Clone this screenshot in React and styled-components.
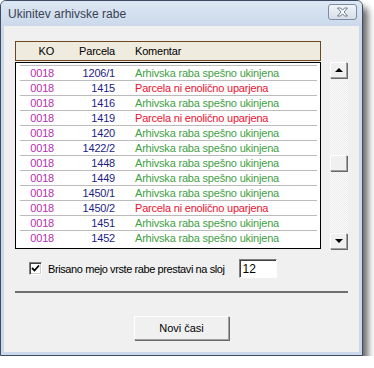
import React from 'react';
import styled, { createGlobalStyle } from 'styled-components';

const GlobalStyle = createGlobalStyle`
  html, body {
    margin: 0;
    padding: 0;
    background: #ffffff;
  }
  body {
    font-family: "Liberation Sans", Arial, sans-serif;
    font-size: 11px;
  }
`;

const rows = [
  { ko: '0018', parcela: '1206/1', ok: true },
  { ko: '0018', parcela: '1415', ok: false },
  { ko: '0018', parcela: '1416', ok: true },
  { ko: '0018', parcela: '1419', ok: false },
  { ko: '0018', parcela: '1420', ok: true },
  { ko: '0018', parcela: '1422/2', ok: true },
  { ko: '0018', parcela: '1448', ok: true },
  { ko: '0018', parcela: '1449', ok: true },
  { ko: '0018', parcela: '1450/1', ok: true },
  { ko: '0018', parcela: '1450/2', ok: false },
  { ko: '0018', parcela: '1451', ok: true },
  { ko: '0018', parcela: '1452', ok: true },
];

const App = () => {
  return (
    <>
      <GlobalStyle />
      <Window>
        <TitleBar>
          <Title>Ukinitev arhivske rabe</Title>
          <CloseButton>
            <svg width="13" height="10" viewBox="0 0 13 10">
              <path
                d="M1.5 1 L4.5 1 L6.5 3.2 L8.5 1 L11.5 1 L8 5 L11.5 9 L8.5 9 L6.5 6.8 L4.5 9 L1.5 9 L5 5 Z"
                fill="#ffffff"
                stroke="#5f6f86"
                strokeWidth="0.9"
                strokeLinejoin="round"
              />
            </svg>
          </CloseButton>
        </TitleBar>
        <Client>
          <ListArea>
            <ListColumn>
              <Header>
                <KoCell>KO</KoCell>
                <ParcelaCell>Parcela</ParcelaCell>
                <CommentCell>Komentar</CommentCell>
              </Header>
              <List>
                {rows.map((r, i) => (
                  <Row key={i}>
                    <KoCell $color="#b52db5">{r.ko}</KoCell>
                    <ParcelaCell $color="#1d1d86">{r.parcela}</ParcelaCell>
                    <CommentCell $color={r.ok ? '#3f9f45' : '#f0112f'}>
                      {r.ok ? 'Arhivska raba spešno ukinjena' : 'Parcela ni enolično uparjena'}
                    </CommentCell>
                  </Row>
                ))}
              </List>
            </ListColumn>
            <ScrollBar>
              <ScrollButton>
                <Arrow $up />
              </ScrollButton>
              <Track>
                <Thumb />
              </Track>
              <ScrollButton>
                <Arrow />
              </ScrollButton>
            </ScrollBar>
          </ListArea>

          <OptionRow>
            <CheckBox>
              <svg width="9" height="9" viewBox="0 0 9 9">
                <path d="M1 4 L3.5 6.5 L8 1.5" fill="none" stroke="#000" strokeWidth="1.8" />
              </svg>
            </CheckBox>
            <OptionLabel>Brisano mejo vrste rabe prestavi na sloj</OptionLabel>
            <NumberField>12</NumberField>
          </OptionRow>

          <Separator />

          <ButtonRow>
            <PushButton>Novi časi</PushButton>
          </ButtonRow>
        </Client>
      </Window>
    </>
  );
};

export default App;

const Window = styled.div`
  width: 363px;
  height: 356px;
  box-sizing: border-box;
  display: flex;
  flex-direction: column;
  border: 1px solid #3d4c62;
  border-radius: 6px 6px 0 0;
  background: #cad8ea;
  box-shadow: 5px 7px 7px rgba(0, 0, 0, 0.6);
`;

const TitleBar = styled.div`
  height: 25px;
  flex: 0 0 25px;
  display: flex;
  align-items: center;
  justify-content: space-between;
  padding: 0 5px 0 7px;
  border-radius: 5px 5px 0 0;
  background: linear-gradient(#dde7f4, #cbd9eb);
`;

const Title = styled.span`
  font-family: "Liberation Sans", Arial, sans-serif;
  font-size: 12px;
  color: #3a4250;
  margin-top: 1px;
`;

const CloseButton = styled.div`
  width: 29px;
  height: 16px;
  margin-top: -3px;
  box-sizing: border-box;
  border: 1px solid #7c8ca3;
  border-radius: 3px;
  background: linear-gradient(#f1f4f8, #d7dee8);
  display: flex;
  align-items: center;
  justify-content: center;
`;

const Client = styled.div`
  flex: 1;
  margin: 0 3px 3px 3px;
  background: #f0f0f0;
  padding: 15px 11px 0 11px;
  display: flex;
  flex-direction: column;
`;

const ListArea = styled.div`
  display: flex;
  gap: 9px;
`;

const ListColumn = styled.div`
  width: 306px;
  display: flex;
  flex-direction: column;
  gap: 1px;
`;

const Header = styled.div`
  height: 20px;
  box-sizing: border-box;
  border: 1px solid #6e4621;
  background: #efebde;
  display: flex;
  align-items: center;
  padding-left: 4px;
  color: #000;
`;

const List = styled.div`
  height: 187px;
  box-sizing: border-box;
  border: 1px solid #000;
  background: #fff;
  padding: 2px 3px 0 4px;
`;

const Row = styled.div`
  height: 15px;
  box-sizing: border-box;
  border-top: 1px solid #bcbcbc;
  display: flex;
  align-items: center;
`;

const Cell = styled.span`
  color: ${(p) => p.$color || '#000'};
  letter-spacing: -0.2px;
  white-space: nowrap;
  line-height: 13px;
`;

const KoCell = styled(Cell)`
  width: 34px;
  text-align: right;
`;

const ParcelaCell = styled(Cell)`
  width: 61px;
  text-align: right;
`;

const CommentCell = styled(Cell)`
  padding-left: 20px;
`;

const ScrollBar = styled.div`
  width: 18px;
  margin-top: 21px;
  height: 187px;
  display: flex;
  flex-direction: column;
`;

const raised = `
  box-sizing: border-box;
  background: #f0f0f0;
  border-top: 1px solid #ffffff;
  border-left: 1px solid #ffffff;
  border-right: 1px solid #a0a0a0;
  border-bottom: 1px solid #a0a0a0;
  box-shadow: 1px 1px 0 #696969;
`;

const ScrollButton = styled.div`
  ${raised}
  width: 17px;
  height: 16px;
  display: flex;
  align-items: center;
  justify-content: center;
`;

const Arrow = styled.div`
  width: 0;
  height: 0;
  border-left: 4px solid transparent;
  border-right: 4px solid transparent;
  ${(p) => (p.$up ? 'border-bottom: 4px solid #000;' : 'border-top: 4px solid #000;')}
`;

const Track = styled.div`
  flex: 1;
  margin: 1px 0;
  background-color: #f6f6f6;
  background-image: repeating-conic-gradient(#ececec 0% 25%, #fbfbfb 0% 50%);
  background-size: 2px 2px;
  padding-top: 76px;
`;

const Thumb = styled.div`
  ${raised}
  width: 17px;
  height: 16px;
`;

const OptionRow = styled.div`
  display: flex;
  align-items: center;
  margin-top: 10px;
  padding-left: 14px;
  height: 19px;
`;

const CheckBox = styled.div`
  width: 13px;
  height: 13px;
  box-sizing: border-box;
  background: #fff;
  border-top: 1px solid #808080;
  border-left: 1px solid #808080;
  border-right: 1px solid #ffffff;
  border-bottom: 1px solid #ffffff;
  box-shadow: inset 1px 1px 0 #404040, inset -1px -1px 0 #d4d0c8;
  display: flex;
  align-items: center;
  justify-content: center;
`;

const OptionLabel = styled.span`
  margin-left: 6px;
  color: #000;
  white-space: nowrap;
  letter-spacing: -0.4px;
`;

const NumberField = styled.div`
  margin-left: 14px;
  width: 38px;
  height: 19px;
  box-sizing: border-box;
  background: #fff;
  border-top: 1px solid #808080;
  border-left: 1px solid #808080;
  border-right: 1px solid #ffffff;
  border-bottom: 1px solid #ffffff;
  box-shadow: inset 1px 1px 0 #404040;
  padding: 2px 0 0 3px;
  color: #000;
  font-size: 12px;
`;

const Separator = styled.div`
  margin-top: 13px;
  height: 2px;
  background: #6f6f6f;
`;

const ButtonRow = styled.div`
  display: flex;
  justify-content: center;
  margin-top: 23px;
`;

const PushButton = styled.button`
  width: 95px;
  height: 24px;
  box-sizing: border-box;
  background: #f0f0f0;
  border: none;
  border-top: 1px solid #ffffff;
  border-left: 1px solid #ffffff;
  border-right: 1px solid #a0a0a0;
  border-bottom: 1px solid #a0a0a0;
  box-shadow: 1px 1px 0 #696969;
  font-family: "Liberation Sans", Arial, sans-serif;
  font-size: 11px;
  color: #000;
  padding: 0;
`;
